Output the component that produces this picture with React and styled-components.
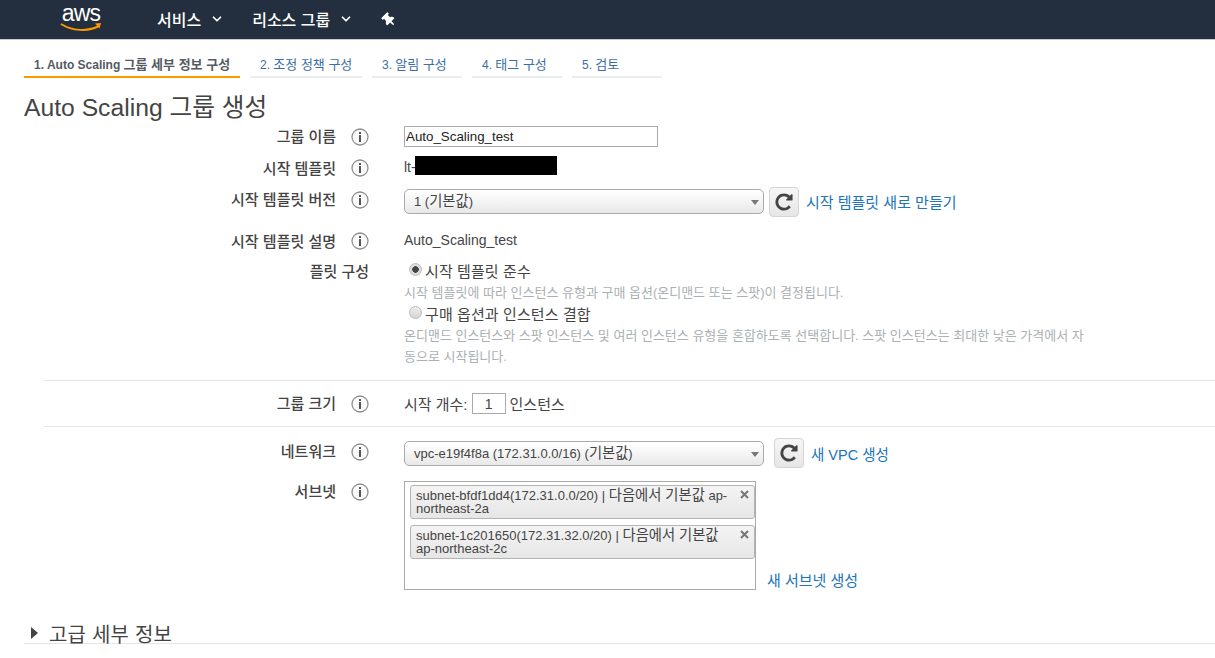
import React from "react";
import styled, { createGlobalStyle } from "styled-components";
import { FaThumbtack } from "react-icons/fa";
import { ChevronDown } from "lucide-react";

const GlobalStyle = createGlobalStyle`
  html, body {
    margin: 0;
    height: 658px;
    overflow: hidden;
    background: #fff;
    color: #444;
    font-family: "Liberation Sans", "Noto Sans CJK KR", sans-serif;
    font-size: 14px;
  }
  * { box-sizing: border-box; }
`;

const TopBar = styled.header`
  height: 40px;
  background: #232f3e;
  border-bottom: 1px solid #c8ccd0;
  display: flex;
  align-items: center;
  padding: 0 0 1px 60px;
  color: #fff;
`;

const Logo = styled.div`
  width: 42px;
  margin: 0 55px 6px 0;
  display: flex;
  flex-direction: column;
  align-items: center;
`;

const LogoText = styled.span`
  font-size: 23px;
  line-height: 26px;
  letter-spacing: -0.8px;
`;

const Swoosh = styled.svg`
  display: block;
  margin-top: -3px;
`;

const NavItem = styled.div`
  display: flex;
  align-items: center;
  gap: 9px;
  margin-right: 28px;
  font-size: 16px;
  font-weight: 500;
`;

const PinIcon = styled(FaThumbtack)`
  width: 14px;
  height: 14px;
  margin: 1px 0 0 1px;
  transform: rotate(-45deg);
`;

const Ko = styled.span`
  font-size: ${p => p.$s}px;
`;

const ChipKo = styled.span`
  display: inline-block;
  font-size: 14.3px;
  line-height: 13px;
`;

const Tabs = styled.nav`
  display: flex;
  gap: 10px;
  padding: 11px 0 0 24px;
`;

const Tab = styled.div`
  width: ${p => p.$w}px;
  height: 27px;
  padding: 4px 0 0 10px;
  font-size: 12px;
  line-height: 20px;
  white-space: nowrap;
  font-weight: ${p => (p.$active ? 700 : 400)};
  color: ${p => (p.$active ? "#545b64" : "#3a6ea5")};
  border-bottom: 2px solid ${p => (p.$active ? "#ff9900" : "#eaeded")};
`;

const Title = styled.h1`
  margin: 14px 0 0 24px;
  height: 31px;
  font-size: 24.7px;
  line-height: 31px;
  font-weight: 400;
  color: #444;
`;

const Row = styled.div`
  margin-left: 44px;
  display: grid;
  grid-template-columns: 292px 68px 1fr;
  height: ${p => p.$h}px;
  align-items: ${p => (p.$top ? "start" : "center")};
  padding-top: ${p => p.$pad || 0}px;
  border-bottom: ${p => (p.$line ? "1px solid #e6e6e6" : "none")};
`;

const Label = styled.div`
  text-align: right;
  font-size: 15px;
  font-weight: 500;
  color: #444;
  line-height: 21px;
  margin-top: ${p => (p.$up ? "-4px" : p.$down ? "2px" : "0")};
`;

const FleetLabel = styled(Label)`
  grid-column: 1 / span 2;
  padding-right: 35px;
`;

const InfoWrap = styled.svg`
  display: block;
  margin: ${p => (p.$up ? "-3px" : p.$down ? "2px" : "0")} 0 0 15px;
`;

const Field = styled.div`
  display: flex;
  align-items: center;
  min-width: 0;
`;

const TextInput = styled.input`
  width: 254px;
  height: 21px;
  padding: 0 1px;
  border: 1px solid #aaa;
  font-family: inherit;
  font-size: 13.33px;
  color: #222;
  outline: none;
`;

const Redacted = styled.span`
  width: 142px;
  height: 19px;
  margin: -3px 0 0 -1px;
  background: #000;
`;

const Select = styled.div`
  position: relative;
  width: 360px;
  height: 25px;
  padding-left: 9px;
  border: 1px solid #aaa;
  border-radius: 5px;
  background: linear-gradient(#fff, #f6f6f6 45%, #e8e8e8);
  font-size: 13px;
  line-height: 22px;
  color: #444;
  white-space: nowrap;
`;

const Caret = styled.i`
  position: absolute;
  right: 4px;
  top: 10px;
  border-top: 5px solid #777;
  border-left: 4px solid transparent;
  border-right: 4px solid transparent;
`;

const RefreshButton = styled.button`
  width: 30px;
  height: 30px;
  margin-left: ${p => p.$gap}px;
  padding: 0;
  display: flex;
  align-items: center;
  justify-content: center;
  border: 1px solid #d5d5d5;
  border-radius: 4px;
  background: linear-gradient(#f7f7f7, #e6e6e6);
  color: #444;
`;

const LinkText = styled.a`
  margin-left: ${p => p.$gap}px;
  color: #2074b8;
  font-size: ${p => p.$s || 15}px;
  white-space: nowrap;
`;

const Options = styled.div`
  line-height: 21.3px;
`;

const RadioLine = styled.div`
  display: flex;
  align-items: center;
  height: 21.3px;
  padding-left: 5px;
  gap: 3px;
  font-size: 15px;
  letter-spacing: 0.1px;
  color: #444;
`;

const Radio = styled.span`
  width: 13px;
  height: 13px;
  border-radius: 50%;
  margin-top: -4px;
  border: 1px solid #bbb;
  background: ${p =>
    p.$on
      ? "radial-gradient(circle, #444 0 3px, #ddd 3.5px)"
      : "linear-gradient(#eee, #d4d4d4)"};
`;

const Help = styled.div`
  width: 684px;
  font-size: 13px;
  color: #aab0b3;
`;

const SizeField = styled(Field)`
  font-size: 15px;
`;

const SizeInput = styled.input`
  width: 34px;
  height: 21px;
  margin: 0 4px;
  border: 1px solid #aaa;
  padding: 0;
  text-align: center;
  font-family: inherit;
  font-size: 14px;
  color: #444;
`;

const SubnetBox = styled.div`
  width: 352px;
  height: 109px;
  padding: 3px 0 0 5px;
  border: 1px solid #aaa;
  display: flex;
  flex-direction: column;
  gap: 6px;
  flex: none;
`;

const Chip = styled.div`
  position: relative;
  width: 345px;
  height: 34px;
  padding: 3px 20px 0 5px;
  border: 1px solid #b4b4b4;
  border-radius: 3px;
  background: linear-gradient(#f4f4f4, #e6e6e6);
  font-size: 13px;
  line-height: 13px;
  color: #444;
`;

const ChipClose = styled.svg`
  position: absolute;
  right: 5px;
  top: 4px;
`;

const SubnetLink = styled(LinkText)`
  align-self: flex-end;
`;

const Advanced = styled.div`
  margin: 32px 0 0 24px;
  height: 22px;
  display: flex;
  align-items: center;
  gap: 11px;
  padding: 1px 0 0 7px;
  font-size: 20px;
  letter-spacing: 0.2px;
  color: #444;
  border-bottom: 1px solid #e6e6e6;
`;

const Triangle = styled.i`
  border-left: 7px solid #444;
  border-top: 6px solid transparent;
  border-bottom: 6px solid transparent;
`;

const Info = ({ up, down }) => (
  <InfoWrap $up={up} $down={down} width="18" height="18" viewBox="0 0 18 18">
    <circle cx="9" cy="9" r="8" fill="#fbfbfb" stroke="#8f8f8f" strokeWidth="1.3" />
    <rect x="8" y="4" width="2" height="2" fill="#555" />
    <rect x="8" y="7" width="2" height="7" fill="#555" />
  </InfoWrap>
);

const Refresh = ({ gap }) => (
  <RefreshButton $gap={gap} aria-label="refresh">
    <svg width="20" height="20" viewBox="0 0 1792 1792" fill="currentColor">
      <path d="M1664 256v448q0 26-19 45t-45 19h-448q-42 0-59-40-17-39 14-69l138-138q-148-137-349-137-104 0-198.5 40.5t-163.5 109.5-109.5 163.5-40.5 198.5 40.5 198.5 109.5 163.5 163.5 109.5 198.5 40.5q119 0 225-52t179-147q7-10 23-12 15 0 25 9l137 138q9 8 9.5 20.5t-7.5 22.5q-109 132-264 204.5t-327 72.5q-156 0-298-61t-245-164-164-245-61-298 61-298 164-245 245-164 298-61q147 0 284.5 55.5t244.5 156.5l130-129q29-31 70-14 39 17 39 59z" />
    </svg>
  </RefreshButton>
);

const Close = () => (
  <ChipClose width="9" height="9" viewBox="0 0 9 9">
    <path d="M1 1l7 7M8 1l-7 7" stroke="#777" strokeWidth="2" />
  </ChipClose>
);

export default function App() {
  return (
    <>
      <GlobalStyle />
      <TopBar>
        <Logo>
          <LogoText>aws</LogoText>
          <Swoosh width="42" height="10" viewBox="0 0 42 10">
            <path d="M1 1c11 7 27 8 38 2" fill="none" stroke="#ff9900" strokeWidth="2" />
            <path d="M35 .5l6-.5-1.5 5.5z" fill="#ff9900" />
          </Swoosh>
        </Logo>
        <NavItem>
          서비스 <ChevronDown size={14} strokeWidth={3} />
        </NavItem>
        <NavItem>
          리소스 그룹 <ChevronDown size={14} strokeWidth={3} />
        </NavItem>
        <PinIcon />
      </TopBar>

      <Tabs>
        <Tab $w={216} $active>1. Auto Scaling <Ko $s={13}>그룹 세부 정보 구성</Ko></Tab>
        <Tab $w={112}>2. <Ko $s={13}>조정 정책 구성</Ko></Tab>
        <Tab $w={90}>3. <Ko $s={13}>알림 구성</Ko></Tab>
        <Tab $w={90}>4. <Ko $s={13}>태그 구성</Ko></Tab>
        <Tab $w={90}>5. <Ko $s={13}>검토</Ko></Tab>
      </Tabs>

      <Title>Auto Scaling 그룹 생성</Title>

      <Row $h={27}>
        <Label>그룹 이름</Label>
        <Info />
        <Field>
          <TextInput defaultValue="Auto_Scaling_test" />
        </Field>
      </Row>
      <Row $h={34}>
        <Label $down>시작 템플릿</Label>
        <Info down />
        <Field>
          lt-<Redacted />
        </Field>
      </Row>
      <Row $h={35}>
        <Label $up>시작 템플릿 버전</Label>
        <Info up />
        <Field>
          <Select>
            1 (<Ko $s={14.3}>기본값</Ko>)
            <Caret />
          </Select>
          <Refresh gap={5} />
          <LinkText $gap={7}>시작 템플릿 새로 만들기</LinkText>
        </Field>
      </Row>
      <Row $h={42}>
        <Label $down>시작 템플릿 설명</Label>
        <Info down />
        <Field>Auto_Scaling_test</Field>
      </Row>
      <Row $h={120} $top $line>
        <FleetLabel>플릿 구성</FleetLabel>
        <Options>
          <RadioLine>
            <Radio $on />
            시작 템플릿 준수
          </RadioLine>
          <Help>시작 템플릿에 따라 인스턴스 유형과 구매 옵션(온디맨드 또는 스팟)이 결정됩니다.</Help>
          <RadioLine>
            <Radio />
            구매 옵션과 인스턴스 결합
          </RadioLine>
          <Help>
            온디맨드 인스턴스와 스팟 인스턴스 및 여러 인스턴스 유형을 혼합하도록 선택합니다. 스팟 인스턴스는 최대한 낮은 가격에서 자동으로 시작됩니다.
          </Help>
        </Options>
      </Row>
      <Row $h={46} $line>
        <Label>그룹 크기</Label>
        <Info />
        <SizeField>
          시작 개수:
          <SizeInput defaultValue="1" />
          인스턴스
        </SizeField>
      </Row>
      <Row $h={52}>
        <Label $up>네트워크</Label>
        <Info up />
        <Field>
          <Select>
            vpc-e19f4f8a (172.31.0.0/16) (<Ko $s={14.3}>기본값</Ko>)
            <Caret />
          </Select>
          <Refresh gap={10} />
          <LinkText $gap={7} $s={14.5}>새 VPC 생성</LinkText>
        </Field>
      </Row>
      <Row $h={111} $top $pad={2}>
        <Label>서브넷</Label>
        <Info down />
        <Field>
          <SubnetBox>
            <Chip>
              subnet-bfdf1dd4(172.31.0.0/20) | <ChipKo>다음에서 기본값</ChipKo> ap-northeast-2a
              <Close />
            </Chip>
            <Chip>
              subnet-1c201650(172.31.32.0/20) | <ChipKo>다음에서 기본값</ChipKo> ap-northeast-2c
              <Close />
            </Chip>
          </SubnetBox>
          <SubnetLink $gap={11}>새 서브넷 생성</SubnetLink>
        </Field>
      </Row>
      <Advanced>
        <Triangle />
        고급 세부 정보
      </Advanced>
    </>
  );
}
